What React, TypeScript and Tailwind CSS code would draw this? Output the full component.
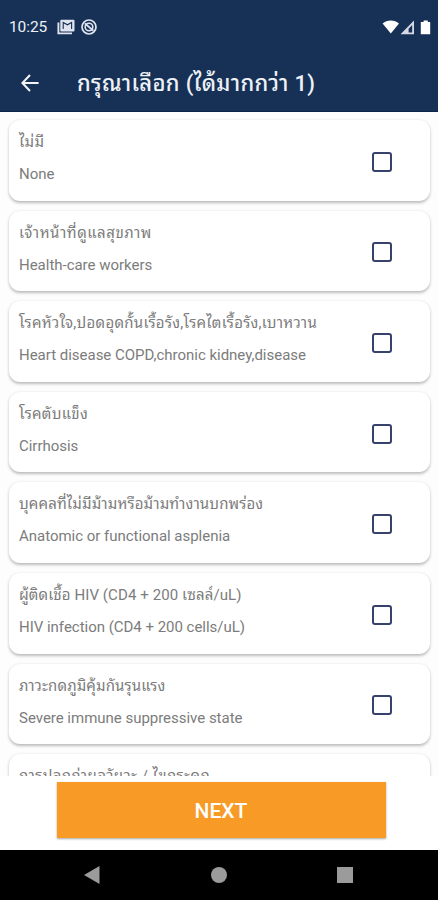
import React, { useState } from 'react';
import clsx from 'clsx';

interface RiskOption {
  th: string;
  en?: string;
  thClass?: string;
}

const OPTIONS: RiskOption[] = [
  { th: 'ไม่มี', en: 'None', thClass: 'tracking-[0.3px]' },
  { th: 'เจ้าหน้าที่ดูแลสุขภาพ', en: 'Health-care workers', thClass: 'tracking-[0.53px]' },
  { th: 'โรคหัวใจ,ปอดอุดกั้นเรื้อรัง,โรคไตเรื้อรัง,เบาหวาน', en: 'Heart disease COPD,chronic kidney,disease', thClass: 'tracking-[0.27px]' },
  { th: 'โรคตับแข็ง', en: 'Cirrhosis', thClass: 'tracking-[0.3px]' },
  { th: 'บุคคลที่ไม่มีม้ามหรือม้ามทำงานบกพร่อง', en: 'Anatomic or functional asplenia', thClass: 'tracking-[0.14px]' },
  { th: 'ผู้ติดเชื้อ HIV (CD4 + 200 เซลล์/uL)', en: 'HIV infection (CD4 + 200 cells/uL)', thClass: 'tracking-[0.1px]' },
  { th: 'ภาวะกดภูมิคุ้มกันรุนแรง', en: 'Severe immune suppressive state', thClass: 'tracking-[0.12px]' },
  { th: 'การปลูกถ่ายอวัยวะ / ไขกระดูก', thClass: 'tracking-[0.42px]' },
];

function StatusBar() {
  return (
    <div className="flex h-[54px] items-center pl-[9px] pr-[7px]">
      <span className="w-[48px] pt-px text-[15.5px] leading-none tracking-[-0.1px]">10:25</span>
      <svg className="h-[16px] w-[18px]" viewBox="0 0 18 16">
        <path d="M1.4 3.6v10.8H15" fill="none" stroke="#dfe4ee" strokeWidth="1.9" />
        <rect x="3.3" y="0.8" width="14.2" height="11.8" rx="1" fill="#dfe4ee" />
        <path d="M6.2 10V3.4l4.2 2.4 4.2-2.4V10" fill="none" stroke="#173156" strokeWidth="1.1" />
      </svg>
      <svg className="ml-[6px] h-[16px] w-[16px]" viewBox="0 0 16 16" fill="none" stroke="#dfe4ee">
        <circle cx="8" cy="8" r="7" strokeWidth="1.7" />
        <circle cx="8" cy="8" r="3.8" strokeWidth="1.6" />
        <path d="M3.8 4.4l8.6 7.4" strokeWidth="1.8" />
      </svg>
      <div className="flex-1" />
      <svg className="h-[15px] w-[49px]" viewBox="0 0 49 15">
        <path d="M0.6 3.6C5 -0.4 12.5 -0.4 17 3.6L8.8 13.6z" fill="#fff" />
        <path d="M18.5 14.2L32 0.6v13.6z" fill="#d5dae4" />
        <path d="M26.6 12.6V8.8l3.6-3.9v7.7z" fill="#173156" />
        <path d="M41.6 0.6h4.2v1.4h2.4v12.2h-9.4V2h2.8z" fill="#fff" />
      </svg>
    </div>
  );
}

function OptionCard({ option, checked, onToggle }: { option: RiskOption; checked: boolean; onToggle: () => void }) {
  return (
    <div className="flex h-[80.6px] shrink-0 items-center justify-between rounded-[11px] bg-white pl-[10px] pr-[38px] shadow-[0_1.5px_3px_rgba(0,0,0,0.26)]">
      <div className="flex h-full flex-col pt-[6px] text-[15px] text-[#7c7c7c]">
        <span className={clsx('h-[32px] whitespace-nowrap leading-[32px]', option.thClass)}>{option.th}</span>
        <span className="h-[32px] whitespace-nowrap leading-[32px] tracking-[-0.02px]">{option.en}</span>
      </div>
      <button
        aria-pressed={checked}
        onClick={onToggle}
        className={clsx('mt-[3px] h-[20px] w-[20px] rounded-[3px] border-2 border-[#36416c]', checked && 'bg-[#36416c]')}
      />
    </div>
  );
}

export default function App() {
  const [selected, setSelected] = useState<number[]>([]);

  const toggle = (index: number) => {
    setSelected(prev => (prev.includes(index) ? prev.filter(i => i !== index) : [...prev, index]));
  };

  return (
    <div className="flex h-[900px] w-[438px] flex-col overflow-hidden bg-white font-[Roboto,'Noto_Sans_Thai_Looped','Noto_Looped_Thai',Loma,Waree,sans-serif]">
      <header className="h-[112px] shrink-0 border-b border-[#0f2547] bg-[#173156] text-[#eef1f6]">
        <StatusBar />
        <div className="flex h-[57px] items-center pl-[21px]">
          <svg className="h-[18px] w-[18px]" viewBox="0 0 18 18" fill="none" stroke="#f2f4f8" strokeWidth="2">
            <path d="M17.6 9H1.6M9 1L1.4 9 9 17" />
          </svg>
          <h1 className="ml-[38px] whitespace-nowrap pt-[2px] text-[22px] font-medium leading-none tracking-[0.29px]">
            กรุณาเลือก (ได้มากกว่า 1)
          </h1>
        </div>
      </header>

      <main className="flex h-[664px] shrink-0 flex-col gap-[10px] overflow-hidden bg-[#fdfdfd] pt-[8px] pr-[8px] pl-[9px]">
        {OPTIONS.map((option, i) => (
          <OptionCard key={option.th} option={option} checked={selected.includes(i)} onToggle={() => toggle(i)} />
        ))}
      </main>

      <div className="flex h-[74px] shrink-0 justify-center pt-[6px] pl-[4px]">
        <button className="h-[56px] w-[329px] bg-[#f89b26] pt-[3px] text-[21px] font-medium text-white shadow-[0_1px_2px_rgba(0,0,0,0.35)]">
          NEXT
        </button>
      </div>

      <nav className="flex h-[50px] shrink-0 items-center bg-black pl-[84px]">
        <svg className="h-[18px] w-[16px]" viewBox="0 0 16 18">
          <path d="M0 9L15.5 0v18z" fill="#9b9b9b" />
        </svg>
        <div className="ml-[111px] h-[16px] w-[16px] rounded-full bg-[#9b9b9b]" />
        <div className="ml-[110px] h-[16px] w-[16px] bg-[#9b9b9b]" />
      </nav>
    </div>
  );
}
